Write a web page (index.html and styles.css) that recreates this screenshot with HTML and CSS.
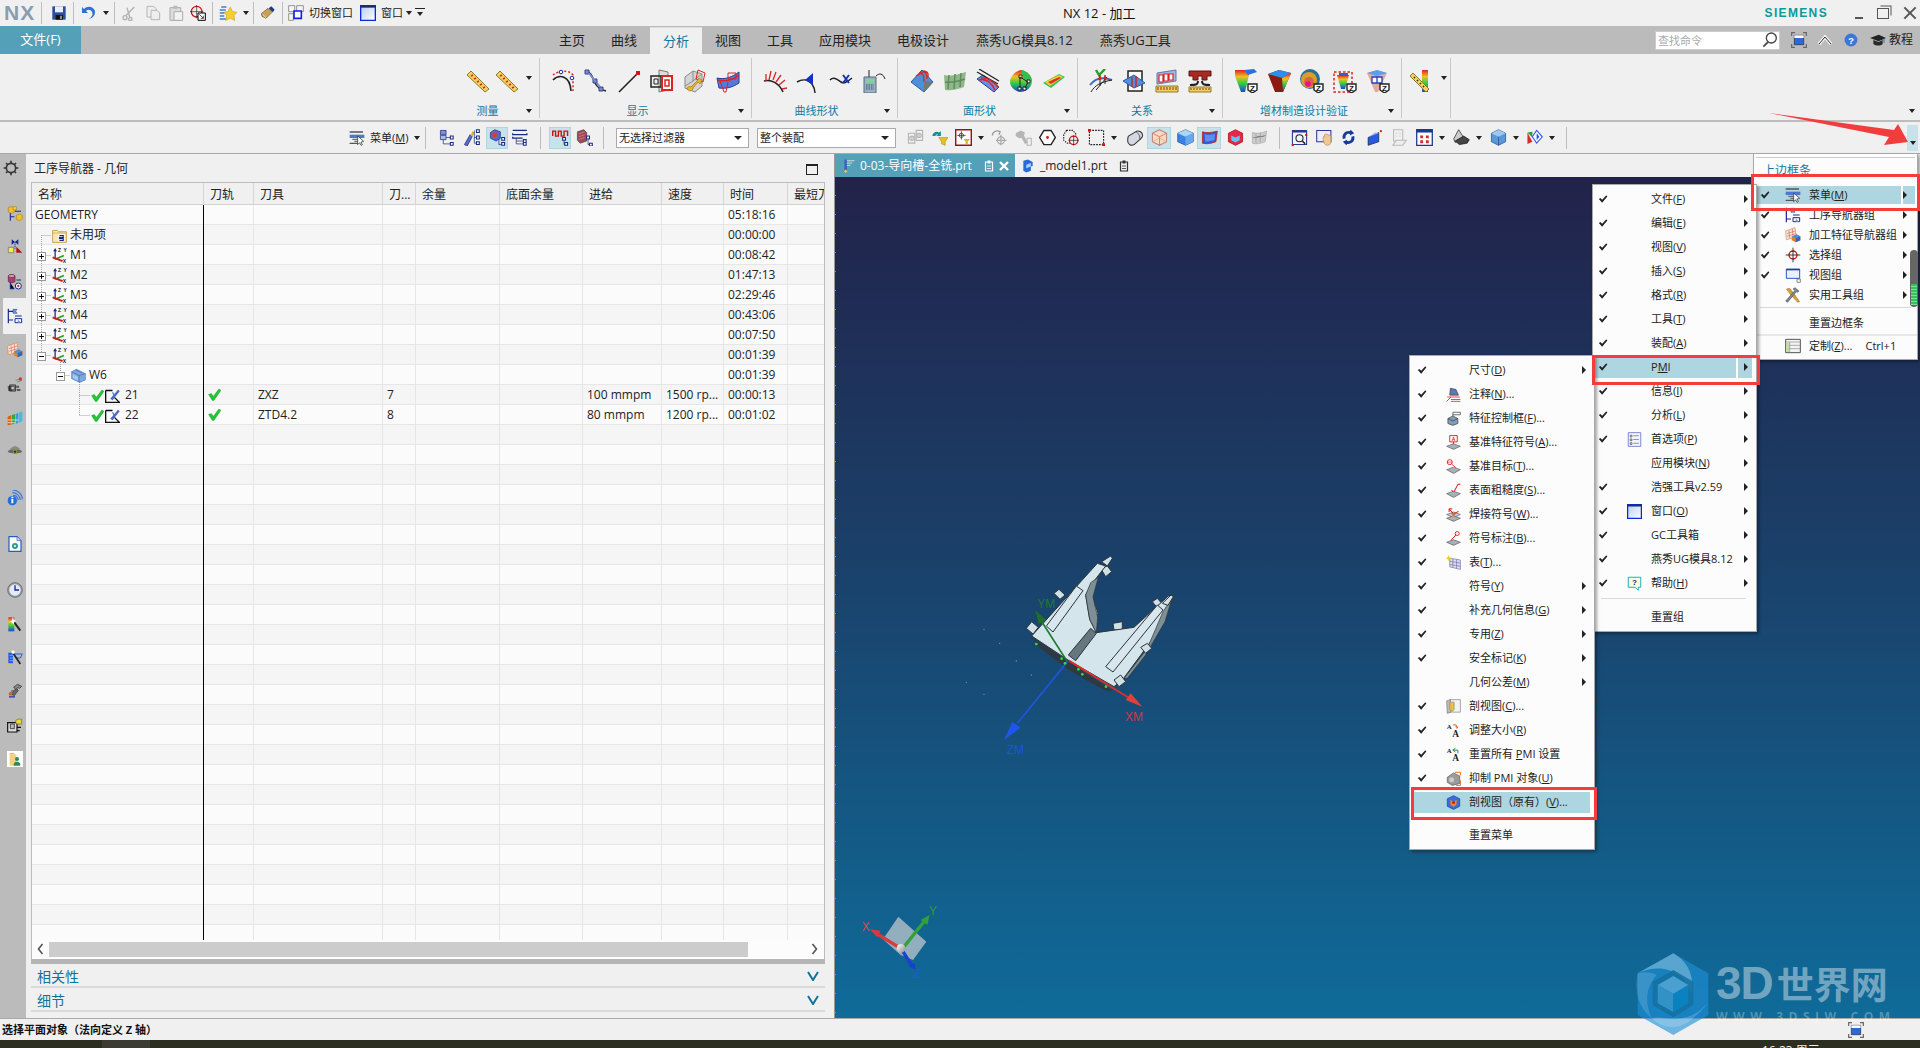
FILE: index.html
```html
<!DOCTYPE html>
<html lang="zh-CN">
<head>
<meta charset="utf-8">
<title>NX 12 - 加工</title>
<link rel="stylesheet" href="styles.css">
</head>
<body>
<svg class="defs" aria-hidden="true">
<defs>
<linearGradient id="gWin" x1="0" y1="0" x2="1" y2="1"><stop offset="0" stop-color="#b8cdf0"/><stop offset="1" stop-color="#fff"/></linearGradient>
<linearGradient id="gRain" x1="0" y1="0" x2="0" y2="1"><stop offset="0" stop-color="#e02020"/><stop offset=".3" stop-color="#f0c020"/><stop offset=".6" stop-color="#30d040"/><stop offset="1" stop-color="#2040e0"/></linearGradient>
<linearGradient id="gBall" x1="0" y1="0" x2="1" y2="1"><stop offset="0" stop-color="#fff"/><stop offset="1" stop-color="#8a8a8a"/></linearGradient>
<symbol id="save" viewBox="0 0 24 24"><path d="M2 2h20v20H2z" fill="#2a4f94"/><path d="M6 2h12v9H6z" fill="#e8eefc"/><path d="M7 15h11v7H7z" fill="#111"/><path d="M14 16h2v5h-2z" fill="#ccc"/></symbol>
<symbol id="undo" viewBox="0 0 24 24"><path d="M3 3v9h9L9 9c3-3 7-2 9 1 2 4 0 8-5 11 7-1 11-7 9-13-2-5-10-8-16-2z" fill="#2f72cc"/></symbol>
<symbol id="cut" viewBox="0 0 24 24"><g fill="none" stroke="#b0b0b0" stroke-width="2"><circle cx="6" cy="19" r="3"/><circle cx="14" cy="21" r="2.5"/><path d="M7 16 20 3M13 18 9 4"/></g></symbol>
<symbol id="copy" viewBox="0 0 24 24"><path d="M3 2h10l4 4v12H3z" fill="#eee" stroke="#b5b5b5" stroke-width="1.5"/><path d="M9 8h9l4 4v10H9z" fill="#eee" stroke="#b5b5b5" stroke-width="1.5"/></symbol>
<symbol id="paste" viewBox="0 0 24 24"><path d="M3 4h16v19H3z" fill="#ddd" stroke="#aaa" stroke-width="1.5"/><path d="M8 1h6v5H8z" fill="#bbb"/><path d="M9 10h13v13H9z" fill="#f2f2f2" stroke="#aaa" stroke-width="1.5"/></symbol>
<symbol id="target" viewBox="0 0 24 24"><circle cx="10" cy="10" r="8" fill="none" stroke="#c11" stroke-width="2"/><path d="M10 0v20M0 10h20" stroke="#222"/><path d="M12 12h11v11H12z" fill="#fff" stroke="#000" stroke-width="1.5"/><path d="M14 14l6 6M20 16v4h-4" stroke="#000" fill="none"/></symbol>
<symbol id="star" viewBox="0 0 24 24"><path d="M15 4l3 6 6 1-4 4 1 7-6-3-6 3 1-7-4-4 6-1z" fill="#f5cf30" stroke="#c09a10" stroke-width=".7"/><path d="M1 8h8M1 12h6M1 16h6M1 20h8M3 4h7" stroke="#3f7fd0" stroke-width="2"/></symbol>
<symbol id="brush" viewBox="0 0 24 24"><path d="M2 13 12 5l6 6-9 9-6-3z" fill="#c7a15a" stroke="#6a4f25"/><path d="M13 5l4-3 5 5-3 4z" fill="#1c3e78"/><path d="M4 14l5 5" stroke="#fff"/></symbol>
<symbol id="swin" viewBox="0 0 24 24"><path d="M1 1h9v9H1zM13 1h10v9H13zM1 13h7v10H1z" fill="#f5f5f5" stroke="#666"/><path d="M9 9h11v11H9z" fill="#fff" stroke="#1020e0" stroke-width="2.4"/></symbol>
<symbol id="win" viewBox="0 0 24 24"><path d="M1 1h22v22H1z" fill="url(#gWin)" stroke="#0a28e0" stroke-width="2"/><path d="M1 1h22v3H1z" fill="#14306e"/></symbol>
<symbol id="cust" viewBox="0 0 24 24"><path d="M1 2h22v20H1z" fill="#f4f4f4" stroke="#555" stroke-width="1.5"/><path d="M1 6h22M1 11h22M1 16h22M7 6v16" stroke="#8a8a8a"/><path d="M2 7h4v14H2z" fill="#bde0a8"/></symbol>

<symbol id="ruler" viewBox="0 0 24 24"><path d="M1 6 5 2 23 20 19 23z" fill="#f2d25a" stroke="#8b7a2c"/><path d="M5 7l2-1M8 10l2-1M11 13l2-1M14 16l2-1M17 19l2-1" stroke="#d22" stroke-width="1.6"/></symbol>
<symbol id="arc" viewBox="0 0 24 24"><path d="M2 11c6-6 17-5 18 11" fill="none" stroke="#222" stroke-width="1.6"/><path d="M2 6c5-4 15-6 20 0v16" fill="none" stroke="#d22" stroke-width="1.5" stroke-dasharray="2 2"/><circle cx="10" cy="3" r="1.8" fill="#fff" stroke="#22a"/><circle cx="21" cy="9" r="1.8" fill="#fff" stroke="#22a"/></symbol>
<symbol id="spline" viewBox="0 0 24 24"><path d="M3 2c6 3 6 9 8 12 2 4 6 7 11 8" fill="none" stroke="#222" stroke-width="1.5"/><path d="M1 1h4v4H1zM9 10h4v4H9zM15 18h4v4h-4z" fill="#7c88cc" stroke="#33478c"/><path d="M5 4l5 7M13 14l3 4" stroke="#7c88cc" stroke-width="2"/></symbol>
<symbol id="line" viewBox="0 0 24 24"><path d="M2 23 21 4" stroke="#222" stroke-width="1.6"/><path d="M19 2h4v4h-4z" fill="#d11"/></symbol>
<symbol id="rcube" viewBox="0 0 24 24"><path d="M9 1 18 3v18l-9 2z" fill="#ddd" stroke="#777"/><path d="M1 7h10v11H1z" fill="none" stroke="#222" stroke-width="1.5"/><path d="M4 10h4v5H4z" fill="none" stroke="#222"/><path d="M12 7h10v14H12z" fill="#fff" stroke="#d22" stroke-width="2"/><path d="M15 11h4v6h-4z" fill="none" stroke="#d22" stroke-width="1.5"/></symbol>
<symbol id="wrench" viewBox="0 0 24 24"><path d="M2 8l8-6 9 3v12l-7 6-10-4z" fill="#d4d4d4" stroke="#8a8a8a"/><path d="M10 2v10l-8 5M10 12l9-7" stroke="#8a8a8a" fill="none"/><path d="M15 1l7 3-2 9-7-3z" fill="none" stroke="#d22"/><path d="M4 20c2 3 6 2 6-1l5-6 2 2 2-4-3-2-2 3-6 6c-2-1-4 0-4 2z" fill="#e5b52a" stroke="#a07a10" stroke-width=".7"/></symbol>
<symbol id="bsurf" viewBox="0 0 24 24"><path d="M1 9c8 2 15-1 22-6v11c-6 4-12 6-20 5z" fill="#5a78d8" stroke="#223a9c"/><path d="M2 11c8 2 15 0 21-5" stroke="#d22" fill="none" stroke-width="1.5"/><path d="M12 4h8v6h-8z" fill="none" stroke="#d22"/><path d="M4 12l4 11h2l2-10" fill="none" stroke="#d22"/></symbol>
<symbol id="comb" viewBox="0 0 24 24"><path d="M1 12c7-2 15 2 19 11" fill="none" stroke="#222" stroke-width="1.6"/><path d="M3 12 3 5M6 11 8 2M10 11 13 3M13 13 18 6M16 16 22 11M19 20 24 19" stroke="#d22" stroke-width="1.3"/></symbol>
<symbol id="cone" viewBox="0 0 24 24"><path d="M1 13c5-3 11-3 15 2 2 3 3 6 3 9" fill="none" stroke="#222" stroke-width="1.5"/><path d="M17 4v12L9 11z" fill="#1830c0"/></symbol>
<symbol id="wave" viewBox="0 0 24 24"><path d="M1 11c4-4 8 0 11 2s6 0 11-4" fill="none" stroke="#222" stroke-width="1.6"/><path d="M14 6l6 8M20 6l-6 8" stroke="#1830c0" stroke-width="2"/></symbol>
<symbol id="calc" viewBox="0 0 24 24"><path d="M2 8h12v16H2z" fill="#9ab0c4" stroke="#5a6a7a"/><path d="M4 10h8v4H4z" fill="#7fd39a"/><path d="M4 16h8M4 18h8M4 20h8" stroke="#33556a" stroke-dasharray="1.5 1"/><path d="M7 1v7M14 7c3-3 7-3 9 3" fill="none" stroke="#222"/></symbol>
<symbol id="s1" viewBox="0 0 24 24"><path d="M1 13 12 1l11 12-9 10z" fill="#4d8fd8" stroke="#2d5aa0"/><path d="M6 7c6-4 8-4 8 6M9 4c6-2 8-2 8 6M13 2c4 0 6 2 5 6" fill="none" stroke="#d22" stroke-width="1.3"/><path d="M14 23 23 13 14 12z" fill="#777"/></symbol>
<symbol id="s2" viewBox="0 0 24 24"><path d="M1 6c7 2 14-1 22-3l-2 15c-6 2-12 4-19 3z" fill="#8fb78a"/><path d="M6 6l-1 14M12 5l-1 15M18 4l-1 14M2 13c7 1 14-1 20-3" stroke="#5f8c5c" stroke-width="1.5" fill="none"/></symbol>
<symbol id="s3" viewBox="0 0 24 24"><path d="M1 10 7 6 23 18l-5 5z" fill="#6a8ee0" stroke="#223a9c"/><path d="M1 3l21 12M3 0l20 12" stroke="#222" stroke-width="1.3"/><path d="M3 11c7-2 12 2 16 10M5 9c7-1 12 3 17 9" fill="none" stroke="#d22" stroke-width="1.4"/></symbol>
<symbol id="s4" viewBox="0 0 24 24"><path d="M12 1c6 1 11 6 11 11 0 8-8 11-12 11C5 22 1 17 1 13 1 7 7 2 12 1z" fill="url(#gRain)"/><path d="M12 1c6 1 11 6 11 11l-8-1z" fill="#30c050"/><path d="M10 6h3v3h-3zM18 11h3v3h-3zM9 18h3v3H9zM14 18h3v3h-3z" fill="#fff" stroke="#222"/><path d="M11 8v11M11 8l8 5M16 19l3-6" stroke="#222" fill="none"/></symbol>
<symbol id="s5" viewBox="0 0 24 24"><path d="M1 14 17 5l6 3-14 11z" fill="#38c060"/><path d="M3 13 17 6l4 2L8 17z" fill="#f0d030"/><path d="M6 13 17 8l2 1L9 15z" fill="#e03030"/></symbol>
<symbol id="r1" viewBox="0 0 24 24"><path d="M1 16c6-8 14-8 22-5" fill="none" stroke="#3a6ad0" stroke-width="2"/><path d="M2 23C6 16 12 13 23 11" fill="none" stroke="#222"/><path d="M7 1l3 5 6-6" fill="none" stroke="#2aa02a" stroke-width="2.4"/><path d="M7 21 18 8M11 6v11M16 6v9" stroke="#222"/><path d="M9 10l2-4 2 4M14 10l2-4 2 4" fill="#d22"/></symbol>
<symbol id="r2" viewBox="0 0 24 24"><path d="M6 2h14v20H6z" fill="#fff" stroke="#222" stroke-width="1.5"/><path d="M1 12 12 6l11 8-11 5z" fill="#4d8fe0" stroke="#2d5aa0"/><path d="M10 8v10M14 7v11" stroke="#d22" stroke-width="1.5"/></symbol>
<symbol id="r3" viewBox="0 0 24 24"><path d="M2 4l19-3v11L2 15z" fill="#9cb8de" stroke="#6078a8"/><path d="M4 6h4v7H4zM9 5h4v7H9zM14 5h4v6h-4z" fill="#fff" stroke="#d22" stroke-width="1.2"/><path d="M1 17h22v6H1z" fill="#f2d25a" stroke="#8b7a2c"/><path d="M3 18v3M6 18v3M9 18v3M12 18v3M15 18v3M18 18v3M21 18v3" stroke="#8b2a2a"/></symbol>
<symbol id="r4" viewBox="0 0 24 24"><path d="M1 2h22v5h-4v4h-5V7h-4v4H5V7H1z" fill="#a82a20" stroke="#611"/><path d="M10 12c0 4-3 4-8 4M14 12c0 4 3 4 8 4" fill="none" stroke="#222" stroke-width="2"/><path d="M1 18h22v5H1z" fill="#f2d25a" stroke="#8b7a2c"/><path d="M3 19v2M6 19v2M9 19v2M12 19v2M15 19v2M18 19v2M21 19v2" stroke="#8b2a2a"/></symbol>
<symbol id="f1" viewBox="0 0 24 24"><path d="M1 1h14v5l-4 17H7L1 7z" fill="url(#gRain)"/><path d="M10 1l10-1 3 3-9 3z" fill="#2e6fe0"/><path d="M14 15h9v6l-4.500 3-4.500-3z" fill="#fff" stroke="#222" stroke-width="1.400"/><text x="18.500" y="22" class="z">Z</text></symbol>
<symbol id="f2" viewBox="0 0 24 24"><path d="M12 1 24 4l-8 19H8L1 5z" fill="#8b1a10"/><path d="M12 1 24 4 15 9 1 5z" fill="#2e8fe8"/><path d="M15 9 24 4l-8 19z" fill="url(#gRain)"/></symbol>
<symbol id="f3" viewBox="0 0 24 24"><circle cx="10" cy="10" r="10" fill="#2a6f9a"/><circle cx="9" cy="11" r="8" fill="#d6a02a"/><circle cx="9" cy="13" r="5" fill="#e06040"/><circle cx="8" cy="15" r="2.800" fill="#e81090"/><path d="M14 15h9v6l-4.500 3-4.500-3z" fill="#fff" stroke="#222" stroke-width="1.400"/><text x="18.500" y="22" class="z">Z</text></symbol>
<symbol id="f4" viewBox="0 0 24 24"><path d="M1 3h18v20H1z" fill="none" stroke="#d22" stroke-width="1.500" stroke-dasharray="2.500 2"/><path d="M4 6h12l-4 14H8z" fill="url(#gRain)"/><path d="M6 4h9v3H6z" fill="#2e5fd0"/><path d="M14 15h9v6l-4.500 3-4.500-3z" fill="#fff" stroke="#222" stroke-width="1.400"/><text x="18.500" y="22" class="z">Z</text></symbol>
<symbol id="f5" viewBox="0 0 24 24"><path d="M1 4 11 1l10 3-9 19h-3z" fill="#e8a8a0"/><path d="M1 4 11 1l10 3-10 3z" fill="#5aa0e8"/><path d="M6 8h5v6H6zM11 8h5v6h-5z" fill="#fff" stroke="#2040c0" stroke-width="1.300"/><path d="M14 15h9v6l-4.500 3-4.500-3z" fill="#fff" stroke="#222" stroke-width="1.400"/><text x="18.500" y="22" class="z">Z</text></symbol>
<symbol id="hruler" viewBox="0 0 24 24"><path d="M13 1h6v22h-6z" fill="url(#gRain)"/><path d="M1 7 4 4 20 20l-3 3z" fill="#f2d25a" stroke="#8b7a2c"/><path d="M5 9l1-1M8 12l1-1M11 15l1-1M14 18l1-1" stroke="#222" stroke-width="1.500"/></symbol>

<symbol id="menuic" viewBox="0 0 24 24"><path d="M1 3h20M1 20h14" stroke="#555" stroke-width="2"/><path d="M1 7h22v5H1z" fill="#4a7ad0"/><path d="M5 14h9M8 17h7" stroke="#555" stroke-width="1.500"/><path d="M13 9l9 8-4 1 2 4-2 1-2-4-3 3z" fill="#fff" stroke="#222"/></symbol>
<symbol id="n1" viewBox="0 0 24 24"><path d="M2 2h8v6H2z" fill="#7a90d8" stroke="#1a2a80"/><path d="M2 9h8v6H2z" fill="#aab8e8" stroke="#1a2a80"/><path d="M6 15v6h10M10 12h6" stroke="#1a2a80" fill="none"/><path d="M16 10h4v4h-4zM16 19h4v4h-4z" fill="#fff" stroke="#1a2a80" stroke-width="1.500"/></symbol>
<symbol id="n2" viewBox="0 0 24 24"><path d="M2 22 10 8l3 3-7 13z" fill="#5a6ac0" stroke="#1a2a80"/><path d="M13 3l3 2-2 5-3-1z" fill="#d8b030"/><path d="M16 2v18M16 12h4M16 20h4" stroke="#1a2a80" fill="none"/><path d="M19 1h4v4h-4zM19 10h4v4h-4zM19 18h4v4h-4z" fill="#fff" stroke="#1a2a80" stroke-width="1.500"/></symbol>
<symbol id="n3" viewBox="0 0 24 24"><path d="M2 5 8 1l8 3v9l-6 4-8-4z" fill="#5a6ac8" stroke="#1a2a80"/><circle cx="8" cy="8" r="3.500" fill="#e23a2a"/><path d="M14 14v8h5" stroke="#1a2a80" fill="none"/><path d="M18 12h4v4h-4zM18 19h4v4h-4z" fill="#fff" stroke="#1a2a80" stroke-width="1.500"/></symbol>
<symbol id="n4" viewBox="0 0 24 24"><path d="M1 2h20M1 6v2h20V6M1 11v2h14" stroke="#1a2a80" stroke-width="1.800" fill="none"/><path d="M6 13v8h10M6 17h10" stroke="#1a2a80" fill="none"/><path d="M16 15h4v4h-4zM16 19h4v4h-4z" fill="#fff" stroke="#1a2a80" stroke-width="1.500"/></symbol>
<symbol id="n5" viewBox="0 0 24 24"><path d="M1 10V3h4v7h4V3h4v7h4V3h5v7" fill="none" stroke="#c11" stroke-width="2"/><path d="M17 13v9h4" stroke="#1a2a80" fill="none"/><path d="M15 12h4v4h-4zM18 19h4v4h-4z" fill="#fff" stroke="#1a2a80" stroke-width="1.500"/></symbol>
<symbol id="n6" viewBox="0 0 24 24"><path d="M2 4l9-3 4 4v12l-9 3-4-4z" fill="#a04a58" stroke="#444"/><path d="M4 7l8-3M4 11l8-3M4 15l8-3" stroke="#d88" /><path d="M17 12v10h4" stroke="#1a2a80" fill="none"/><path d="M15 10h4v4h-4zM19 20h4v4h-4z" fill="#fff" stroke="#1a2a80" stroke-width="1.500"/></symbol>
<symbol id="chain" viewBox="0 0 24 24"><g fill="none" stroke="#b5b5b5" stroke-width="1.600"><path d="M2 6h9v14H2zM13 2h9v14h-9z"/><path d="M7 10v5M17 7v5"/><circle cx="7" cy="13" r="3"/><circle cx="17" cy="9" r="3"/></g></symbol>
<symbol id="filt1" viewBox="0 0 24 24"><path d="M2 10c0-5 6-8 9-5l3-2v7H7l3-2c-2-1-3 0-4 2z" fill="#1a8f9a"/><path d="M11 12h13l-4 6v5l-5-2v-3z" fill="#e8c020" stroke="#a08010" stroke-width=".7"/></symbol>
<symbol id="filt2" viewBox="0 0 24 24"><path d="M1 1h22v22H1z" fill="#fff" stroke="#a01010" stroke-width="2"/><path d="M9 3v12M3 9h12" stroke="#222"/><circle cx="9" cy="9" r="3" fill="none" stroke="#222"/><path d="M12 14h9l-3 4v4l-3-1v-3z" fill="#e8b020"/></symbol>
<symbol id="rot" viewBox="0 0 24 24"><g fill="none" stroke="#aaa" stroke-width="1.800"><circle cx="14" cy="16" r="5"/><path d="M14 8v15M7 16h15"/><path d="M2 9c0-5 6-8 11-5l-2 4" stroke="#999"/></g></symbol>
<symbol id="gbolt" viewBox="0 0 24 24"><g fill="#b5b5b5"><path d="M1 6l7-4 6 3-2 7-6 1-5-3z"/><path d="M9 12l4-2 5 9-4 2z"/></g><path d="M17 13h6v10h-6z" fill="none" stroke="#b5b5b5" stroke-width="1.500"/></symbol>
<symbol id="hex" viewBox="0 0 24 24"><path d="M7 2h10l6 10-6 10H7L1 12z" fill="#fff" stroke="#222" stroke-width="2"/><circle cx="12" cy="12" r="2" fill="#d11"/></symbol>
<symbol id="lasso" viewBox="0 0 24 24"><path d="M5 2h9l4 5v5M5 2 1 8v8l5 4h4" fill="none" stroke="#222" stroke-width="1.600" stroke-dasharray="2 1.500"/><circle cx="15" cy="16" r="6" fill="none" stroke="#c11" stroke-width="1.800"/><path d="M15 9v14M8 16h14" stroke="#222"/></symbol>
<symbol id="rectsel" viewBox="0 0 24 24"><path d="M2 2h20v20H2z" fill="none" stroke="#222" stroke-width="1.600" stroke-dasharray="2.500 1.500"/><path d="M0 0h4v4H0zM20 20h4v4h-4z" fill="#d11"/></symbol>
<symbol id="cyl" viewBox="0 0 24 24"><path d="M2 10 12 4c4-3 10 0 10 5 0 3-2 4-4 6l-8 7c-4 2-9 0-9-5 0-3 0-5 1-7z" fill="#d4d8e0" stroke="#333" stroke-width="1.500"/><path d="M12 4c4 1 7 6 6 11" fill="none" stroke="#333"/></symbol>
<symbol id="cube1" viewBox="0 0 24 24"><path d="M12 1 22 6v12l-10 5L2 18V6z" fill="#f8d8c0" stroke="#b88" stroke-width="1.500"/><path d="M2 6l10 5 10-5M12 11v12" stroke="#d06050" fill="none"/><path d="M2 18l10-5 10 5" stroke="#e8a860" fill="none"/></symbol>
<symbol id="cube2" viewBox="0 0 24 24"><path d="M12 1 23 6v12l-11 5L1 18V6z" fill="#3c82e0" stroke="#1a4a9c"/><path d="M1 6l11 5 11-5-11-5z" fill="#a8d8f8"/><path d="M12 11v12l11-5V6z" fill="#6aa8ec"/></symbol>
<symbol id="surf" viewBox="0 0 24 24"><path d="M2 4c6 2 13 1 21-1l-2 15c-6 2-12 4-19 2z" fill="#2a5ae0" stroke="#c21" stroke-width="1.200"/><path d="M5 7c5 2 10 1 15 0l-1 9c-5 1-9 2-13 2z" fill="#5a90ec"/></symbol>
<symbol id="redcube" viewBox="0 0 24 24"><path d="M12 1 22 6v12l-10 5L2 18V6z" fill="#e8264a" stroke="#a00"/><path d="M6 9l6 3 6-3v7l-6 3-6-3z" fill="#6ac0f0"/></symbol>
<symbol id="gsurf" viewBox="0 0 24 24"><path d="M2 5c6 2 13 1 20-2l-2 15c-6 2-12 4-18 2z" fill="#ccc" stroke="#aaa"/><path d="M7 6v13M13 5v13M2 12c7 0 13-1 19-3" stroke="#999"/></symbol>
<symbol id="zfit" viewBox="0 0 24 24"><path d="M2 2h20v20H2z" fill="#f2f4ff" stroke="#2a3a90" stroke-width="1.500"/><path d="M2 2h20v3H2z" fill="#2a3a90"/><circle cx="12" cy="13" r="5" fill="none" stroke="#222" stroke-width="1.500"/><path d="M16 17l4 4" stroke="#222" stroke-width="2"/><path d="M1 21h3v3H1zM20 7h3v3h-3z" fill="#d11"/></symbol>
<symbol id="pan" viewBox="0 0 24 24"><path d="M1 2h20v16H1z" fill="#eef" stroke="#2a3a90" stroke-width="1.500"/><path d="M10 13c0-3 1-3 2-2V8c1-2 3-1 3 0 1-1 3 0 3 1 2-1 3 0 3 2v7c0 3-2 5-5 5-4 0-6-5-6-10z" fill="#f0c890" stroke="#a07040" stroke-width=".7"/></symbol>
<symbol id="refresh" viewBox="0 0 24 24"><path d="M4 14C2 7 8 2 14 3l1-2 5 5-6 3 0-2C10 6 7 9 8 13zM20 10c2 7-4 12-10 11l-1 2-5-5 6-3 0 2c4 1 7-2 6-6z" fill="#1a3a98"/></symbol>
<symbol id="bluei" viewBox="0 0 24 24"><path d="M3 12 18 5v13L3 23z" fill="#2a5ae0" stroke="#123"/><path d="M3 12l5-2 10-4-5-1z" fill="#80b0f0"/><circle cx="21" cy="3" r="1.500" fill="#d11"/></symbol>
<symbol id="gdoc" viewBox="0 0 24 24"><path d="M5 1h13v16H5z" fill="none" stroke="#bbb" stroke-width="1.500"/><path d="M8 6h2M13 6h2M8 10h2M13 10h2" stroke="#bbb"/><path d="M9 16h14l-5 7H4z" fill="#eee" stroke="#bbb" stroke-width="1.500"/></symbol>
<symbol id="grid" viewBox="0 0 24 24"><path d="M1 1h22v22H1z" fill="#fff" stroke="#1a3a90" stroke-width="1.800"/><path d="M1 1h22v4H1z" fill="#1a3a90"/><path d="M6 9h4v4H6zM14 9h4v4h-4zM6 16h4v4H6zM14 16h4v4h-4z" fill="#d82a2a"/></symbol>
<symbol id="printer" viewBox="0 0 24 24"><path d="M8 1 15 12 3 19 1 14z" fill="#ccc" stroke="#222"/><path d="M3 17 15 10l8 5-3 5-11 2z" fill="#444" stroke="#111"/></symbol>
<symbol id="bcube" viewBox="0 0 24 24"><path d="M12 1 22 6v12l-10 5L2 18V6z" fill="#5a98d8" stroke="#1a4a9c"/><path d="M2 6l10 5 10-5-10-5z" fill="#9cc8f0"/><path d="M12 11v12" stroke="#1a4a9c"/></symbol>
<symbol id="tri" viewBox="0 0 24 24"><path d="M2 5v16l7-3z" fill="#d82a2a"/><path d="M2 5l7 7V4z" fill="#2aa02a"/><path d="M15 2l8 9-8 9-6-9z" fill="#fff" stroke="#2a5ae0" stroke-width="1.500"/><path d="M15 6l4 5-4 5z" fill="#2a5ae0"/></symbol>

<symbol id="gear" viewBox="0 0 24 24"><circle cx="12" cy="12" r="7" fill="none" stroke="#333" stroke-width="2.400"/><path d="M12 1v4M12 19v4M1 12h4M19 12h4M4.500 4.500l3 3M16.500 16.500l3 3M19.500 4.500l-3 3M7.500 16.500l-3 3" stroke="#333" stroke-width="2.400"/></symbol>
<symbol id="a1" viewBox="0 0 24 24"><path d="M2 2l5-1 5 2v5l-5 3-5-2z" fill="#f0c030" stroke="#b08010"/><path d="M9 1h5v5H9z" fill="#f8d040" stroke="#b08010"/><path d="M5 11v11M5 16h6M12 8h9" stroke="#14288c" stroke-width="1.600"/><path d="M14 14l5-2 4 2v5l-4 3-5-2z" fill="#f0c030" stroke="#b08010"/></symbol>
<symbol id="a2" viewBox="0 0 24 24"><path d="M7 2l5 4 5-4v8l-5-4-5 4z" fill="#14288c"/><path d="M12 6v10" stroke="#14288c" stroke-width="1.500" stroke-dasharray="2 1"/><path d="M2 14h8v8H2z" fill="#f8e858" stroke="#666"/><path d="M14 22h9l-9-9z" fill="#b01010"/></symbol>
<symbol id="a3" viewBox="0 0 24 24"><path d="M2 3a5 2 0 0 1 10 0v8a5 2 0 0 1-10 0z" fill="#a8406a" stroke="#5a1a3a"/><ellipse cx="7" cy="3" rx="5" ry="2" fill="#e8b8c8" stroke="#5a1a3a"/><path d="M5 13v9h6M14 9h7" stroke="#14288c" stroke-width="1.600"/><circle cx="17" cy="18" r="4.500" fill="#fff" stroke="#14288c" stroke-width="1.500"/><circle cx="17" cy="18" r="1.800" fill="#c03070"/></symbol>
<symbol id="a4" viewBox="0 0 24 24"><path d="M2 1v22M2 5h7M2 18h7M12 12h10" stroke="#14288c" stroke-width="1.800" fill="none"/><path d="M9 2h6l-2 3 2 3H9z" fill="#6a9ae0" stroke="#14288c" stroke-width=".7"/><path d="M12 16h10v6H12z" fill="#fff" stroke="#14288c" stroke-width="1.500"/><path d="M16 22v-5l5 5z" fill="#6a9ae0"/></symbol>
<symbol id="a5" viewBox="0 0 24 24"><path d="M1 6l14-5 2 14-15 4z" fill="#f4e8d8" stroke="#d08a5a"/><path d="M3 10l12-4M3 14l13-4M6 5l1 12M11 3l1 13" stroke="#d66"/><path d="M10 15l7-4 6 3v6l-7 3-6-3z" fill="#e88020"/><path d="M10 15l7-4 6 3-7 3z" fill="#4a90e0"/><path d="M16 17l7-3v6l-7 3z" fill="#2a6ac0"/></symbol>
<symbol id="a6" viewBox="0 0 24 24"><path d="M1 14l6-1 1 8H2z" fill="#555"/><path d="M4 12h9v9H4z" fill="none" stroke="#222" stroke-width="1.400"/><path d="M6 14h5v5H6z" fill="#ccc" stroke="#222"/><path d="M13 5l7-2M15 8l7-3" stroke="#888" stroke-width="1.500"/><circle cx="20" cy="3" r="2.500" fill="#e03020"/><path d="M14 13h4v3h-4zM15 18h5v3h-5z" fill="#555"/></symbol>
<symbol id="a7" viewBox="0 0 24 24"><path d="M1 10l5-2v14l-5 1z" fill="#e06010"/><path d="M7 8l5-2v14l-5 2z" fill="#2eaa3a"/><path d="M13 6l4-2v15l-4 2z" fill="#30a0e0"/><path d="M18 4l5-2v15l-5 2z" fill="#40c0e0"/><path d="M1 15h16M1 19h12" stroke="#fff"/></symbol>
<symbol id="a8" viewBox="0 0 24 24"><path d="M1 13c3-6 18-6 22 0-4 3-18 3-22 0z" fill="#666"/><path d="M4 9l6-4h4l6 4-3 1H7z" fill="#8a8a8a"/><circle cx="12" cy="13" r="3.500" fill="#7a9a20"/><circle cx="12" cy="13" r="1.500" fill="#222"/></symbol>
<symbol id="a9" viewBox="0 0 24 24"><circle cx="8" cy="16" r="7" fill="#1f6fdc"/><path d="M6.500 10h3v2h-3zM6.500 13h3v7h-3z" fill="#fff"/><path d="M8 4c6 0 12 5 12 11M8 0c8 0 15 6 15 14M9 8c4 0 7 3 8 7" fill="none" stroke="#3a78d8" stroke-width="1.800"/></symbol>
<symbol id="a10" viewBox="0 0 24 24"><path d="M3 1h12l6 6v16H3z" fill="#fff" stroke="#2a5ac0" stroke-width="1.800"/><path d="M15 1v6h6" fill="#cde" stroke="#2a5ac0"/><circle cx="12" cy="15" r="4.500" fill="#2e9a8a"/><circle cx="12" cy="15" r="1.500" fill="#fff"/></symbol>
<symbol id="a11" viewBox="0 0 24 24"><circle cx="12" cy="12" r="11" fill="#9aa0a8" stroke="#555"/><circle cx="12" cy="12" r="8.500" fill="#e4ecf8"/><path d="M12 5v7h6" stroke="#14288c" stroke-width="2" fill="none"/></symbol>
<symbol id="a12" viewBox="0 0 24 24"><path d="M2 2h9v21H2z" fill="url(#gRain)"/><path d="M9 7l11 15" stroke="#222" stroke-width="3"/><path d="M9 1l1 5 4 1-3 2-1 4-2-3-4-1 3-2z" fill="#fff"/></symbol>
<symbol id="a13" viewBox="0 0 24 24"><path d="M2 4h7v16H2z" fill="#2a5ae0"/><path d="M4 8h5M4 12h5M4 16h5" stroke="#9cf"/><path d="M9 6h14l-3 6h-6z" fill="none" stroke="#2a5ae0" stroke-width="1.500"/><path d="M10 6l10 15" stroke="#222" stroke-width="2.500"/><path d="M1 22l2-2 2 2 2-2" stroke="#e8c020" fill="none" stroke-width="1.500"/><circle cx="9" cy="3" r="2.500" fill="#fff"/></symbol>
<symbol id="a14" viewBox="0 0 24 24"><path d="M6 16l8-8 3 3-6 8z" fill="#666" stroke="#333"/><path d="M10 6l6-4 6 3-3 3-3-1-3 3z" fill="#888" stroke="#222"/><path d="M3 19h9v3H3z" fill="#5050a8"/><circle cx="5" cy="16" r="2.500" fill="#d8601a"/><path d="M6 12h5" stroke="#555" stroke-width="1.600"/></symbol>
<symbol id="a15" viewBox="0 0 24 24"><path d="M1 7h14v14H1z" fill="#ddd" stroke="#111" stroke-width="1.800"/><path d="M5 9h6v7H5z" fill="#bbb" stroke="#111"/><path d="M13 5c0-3 5-4 9-3v7h-8z" fill="#e8d838" stroke="#6a6a10"/><path d="M15 13h6v2h-6zM15 18h4v2h-4z" fill="#111"/></symbol>
<symbol id="a16" viewBox="0 0 24 24"><path d="M0 0h24v24H0z" fill="#fff"/><path d="M4 5h10v17H4z" fill="#f4d27a"/><path d="M4 3h6l2 2H4z" fill="#e8b850"/><circle cx="15" cy="12" r="3" fill="#2f8a5a"/><path d="M10 22c0-5 2-6 5-6s5 1 5 6z" fill="#2f8a5a"/></symbol>

<symbol id="mcs" viewBox="0 0 24 24"><path d="M5 18V3" stroke="#14288c" stroke-width="2"/><path d="M5 0l3 5H2z" fill="#14288c"/><path d="M5 18 19 12" stroke="#2aa02a" stroke-width="2.800"/><path d="M1 15l16 6" stroke="#c82020" stroke-width="3.200"/><text x="12" y="7" class="axis">Z</text><text x="21" y="7" class="axis">Y</text><text x="20" y="24" class="axis">X</text></symbol>
<symbol id="folder" viewBox="0 0 24 24"><path d="M1 4h8l2 2h12v17H1z" fill="#f8e8b0" stroke="#c09a40" stroke-width="1.400"/><path d="M1 8h22" stroke="#c09a40"/><path d="M10 10h10v11H10z" fill="#fffbe8"/><path d="M12 12h6v3h-6v2h6v3h-6" fill="none" stroke="#14288c" stroke-width="1.800"/></symbol>
<symbol id="wp" viewBox="0 0 24 24"><path d="M1 6l8-4 6 3 8 4v10l-9 4-13-6z" fill="#7fa8e0" stroke="#4a74b8"/><path d="M1 6l12 6 10-3M13 12v11M7 3l11 5" stroke="#3a64a8" fill="none"/><path d="M3 10l8 4v6l-8-4z" fill="#a8c8f0"/></symbol>
<symbol id="ok" viewBox="0 0 24 24"><path d="M1 12l5-2 4 5L20 2l4 2-13 19h-3z" fill="#1ec832" stroke="#108a20" stroke-width=".6"/></symbol>
<symbol id="op" viewBox="0 0 24 24"><path d="M1 4h11M1 4v19h22l-8-8" fill="none" stroke="#111" stroke-width="2.200"/><path d="M9 17 21 3l2 2-11 14z" fill="#4a6ac8" stroke="#2a3a90" stroke-width=".6"/><path d="M12 7c2 2 3 5 3 8" stroke="#4a6ac8" stroke-width="2" fill="none"/></symbol>
<symbol id="ck" viewBox="0 0 12 12"><path d="M1 6l1.800-1.200L5 7 10 1.500 11.200 3 5 10.500z" fill="#222"/></symbol>

<symbol id="mnote" viewBox="0 0 24 24"><path d="M7 2l9 2 4 9H6z" fill="#5a7ab8" stroke="#333"/><path d="M1 23l7-7M2 16h20M8 20h15M8 23h15" stroke="#d11" stroke-width="1.200"/></symbol>
<symbol id="mfcf" viewBox="0 0 24 24"><path d="M3 12 11 8l8 4v8l-8 3-8-3z" fill="#7f9fb8" stroke="#333"/><path d="M3 12l8 4 8-4" fill="none" stroke="#333"/><path d="M11 8V2h12v4H11" fill="#fff" stroke="#222"/></symbol>
<symbol id="mdat" viewBox="0 0 24 24"><path d="M6 1h12v10H6z" fill="#fff" stroke="#d11" stroke-width="1.400"/><text x="12" y="9.500" class="axisr">A</text><path d="M12 11v5" stroke="#d11" stroke-width="1.400"/><path d="M1 18l11-4 11 4-11 5z" fill="#aab0b8" stroke="#555"/></symbol>
<symbol id="mtgt" viewBox="0 0 24 24"><circle cx="6" cy="5" r="4" fill="#fff" stroke="#d11" stroke-width="1.400"/><path d="M2 5h8M9 8l7 6" stroke="#d11"/><path d="M1 17l11-4 11 4-11 6z" fill="#aab0b8" stroke="#555"/></symbol>
<symbol id="mrgh" viewBox="0 0 24 24"><path d="M9 11l3 5 7-14h4" fill="none" stroke="#d11" stroke-width="1.600"/><path d="M1 17l11-4 11 4-11 6z" fill="#aab0b8" stroke="#555"/></symbol>
<symbol id="mwld" viewBox="0 0 24 24"><path d="M1 12l11-4 11 4-11 5z" fill="#c9ccd0" stroke="#555"/><path d="M1 18l11-4 11 4-11 5z" fill="#aab0b8" stroke="#555"/><path d="M5 3l7 8 8-4M5 3h5M5 3v5" fill="none" stroke="#d11" stroke-width="1.600"/><path d="M7 10l6 4 4-5z" fill="#e86020"/></symbol>
<symbol id="msym" viewBox="0 0 24 24"><path d="M1 18l11-4 11 4-11 5z" fill="#aab0b8" stroke="#555"/><path d="M8 15 16 6" stroke="#d11" stroke-width="1.600"/><circle cx="18" cy="4" r="3.200" fill="#fff" stroke="#d11" stroke-width="1.400"/></symbol>
<symbol id="mtbl" viewBox="0 0 24 24"><path d="M6 5l17 3v15L6 19z" fill="#dde" stroke="#6a6aa0"/><path d="M6 10l17 3M6 15l17 3M11 6v14M17 7v14" stroke="#6a6aa0"/><path d="M4 0l1.500 3.500L9 5 5.500 6.500 4 10 2.500 6.500 0 5l2.500-1.500z" fill="#f0d020"/></symbol>
<symbol id="msec" viewBox="0 0 24 24"><path d="M6 1h17v20H6z" fill="#f2f2f2" stroke="#777"/><path d="M1 3l6-2 1 20-6 2z" fill="#bbb" stroke="#777"/><path d="M6 5h7v12l-3 3-4-3z" fill="#e8c040" stroke="#886"/></symbol>
<symbol id="mres" viewBox="0 0 24 24"><text x="1" y="10" class="axisb">A</text><text x="10" y="23" class="axisbb">A</text><path d="M11 3h5l2 4-3-1M19 6l-2 3" fill="none" stroke="#e06020" stroke-width="1.600"/></symbol>
<symbol id="mreset" viewBox="0 0 24 24"><text x="1" y="10" class="axisb">A</text><text x="10" y="23" class="axisbb">A</text><path d="M15 2l-4 3 4 3M11 5h8v5" fill="none" stroke="#2a8a6a" stroke-width="1.600"/></symbol>
<symbol id="msup" viewBox="0 0 24 24"><path d="M2 10l10-7 10 5v12l-12 3-8-5z" fill="#9a9a9a" stroke="#555"/><path d="M14 2h9v5M23 15v8h-7" stroke="#e07020" stroke-width="1.600" fill="none"/><circle cx="9" cy="14" r="4" fill="#ccc"/></symbol>
<symbol id="msec2" viewBox="0 0 24 24"><path d="M12 1 22 6v12l-10 5L2 18V6z" fill="#3c6ae0" stroke="#1a3aa0"/><path d="M7 8l5 2 5-2v7l-5 4-5-4z" fill="#e88a20"/><path d="M10 10h4v4h-4z" fill="#c11"/></symbol>
<symbol id="mpref" viewBox="0 0 24 24"><path d="M2 1h20v22H2z" fill="#f2f4ff" stroke="#7a84d0" stroke-width="1.500"/><path d="M5 5h3v3H5zM5 11h3v3H5zM5 17h3v3H5z" fill="#c0c8e8" stroke="#555"/><path d="M10 6h9M10 12h9M10 18h9" stroke="#888" stroke-width="1.400"/></symbol>
<symbol id="mhelp" viewBox="0 0 24 24"><path d="M2 2h20v16h-4v5l-5-5H2z" fill="#ffffd8" stroke="#1ab" stroke-width="1.500"/><text x="12" y="15" class="qm">?</text></symbol>
<symbol id="msel" viewBox="0 0 24 24"><circle cx="12" cy="12" r="6" fill="none" stroke="#c11" stroke-width="2"/><path d="M12 1v22M1 12h22" stroke="#222" stroke-width="1.300"/></symbol>
<symbol id="mview" viewBox="0 0 24 24"><path d="M2 3h20v14H2z" fill="#e8f0ff" stroke="#2a5ac0" stroke-width="1.500"/><path d="M2 3h20v2H2z" fill="#2a3a90"/><path d="M18 18h5v5h-5z" fill="#fff" stroke="#555"/></symbol>
<symbol id="mtool" viewBox="0 0 24 24"><path d="M2 3l5-1 5 6 10 14-3 1L8 11z" fill="#d8a030" stroke="#806010" stroke-width=".6"/><path d="M1 21 15 5l-3-2 3-2 6 5-2 2-2-1-13 16z" fill="#7a8a98" stroke="#333" stroke-width=".7"/></symbol>
<symbol id="tabtool" viewBox="0 0 24 24"><path d="M6 1h4v20H6z" fill="#3a5ac8"/><path d="M10 3h13M10 7h9M10 11h6" stroke="#ddd" stroke-width="1.600"/><path d="M8 18l3 3-3 3-3-3z" fill="#f0d020"/></symbol>
<symbol id="tabcube" viewBox="0 0 24 24"><path d="M4 3l8-2 8 4v7l-3 1v7l-8 3-5-3z" fill="#2a6ad8"/><path d="M9 10l8-3v6l-8 3z" fill="#a8d0f8"/></symbol>
<symbol id="docw" viewBox="0 0 24 24"><path d="M5 4h14v18H5z" fill="none" stroke="currentColor" stroke-width="2.400"/><path d="M9 1h6v6H9z" fill="currentColor"/><path d="M8 12h8M8 17h8" stroke="currentColor" stroke-width="1.600"/></symbol>
<symbol id="magn" viewBox="0 0 24 24"><circle cx="14" cy="9" r="7.500" fill="#fff" stroke="#444" stroke-width="2"/><path d="M9 15 2 22" stroke="#555" stroke-width="3"/></symbol>
<symbol id="fit" viewBox="0 0 24 24"><path d="M1 6V1h5M18 1h5v5M23 18v5h-5M6 23H1v-5" fill="none" stroke="#666" stroke-width="1.800"/><path d="M5 5h14v14H5z" fill="#2a6ad8" stroke="#334" stroke-width="1.200"/><path d="M5 5h14v4H5z" fill="#fff"/></symbol>
<symbol id="help" viewBox="0 0 24 24"><circle cx="12" cy="12" r="11" fill="#3a78d8"/><text x="12" y="18" class="qw">?</text></symbol>
<symbol id="cap" viewBox="0 0 24 24"><path d="M0 9l13-5 11 5-11 5z" fill="#222"/><path d="M5 12v6c4 3 11 3 14 0v-6l-6 3z" fill="#2a2a2a"/><path d="M21 10v6" stroke="#3a8ad8" stroke-width="2"/></symbol>
</defs>
</svg>

<div class="titlebar">
  <span class="nx">NX</span><i class="sep"></i>
  <span class="b m5"><svg class="i16"><use href="#save"/></svg></span><i class="sep m2"></i>
  <span class="b m2"><svg class="i16"><use href="#undo"/></svg></span><span class="ar"></span><i class="sep m2"></i>
  <span class="b m2"><svg class="i16"><use href="#cut"/></svg></span><span class="b"><svg class="i16"><use href="#copy"/></svg></span><span class="b n22"><svg class="i16"><use href="#paste"/></svg></span><span class="b n22"><svg class="i16"><use href="#target"/></svg></span><i class="sep m3"></i>
  <span class="b m3"><svg class="i18"><use href="#star"/></svg></span><span class="ar"></span><i class="sep m1"></i>
  <span class="b m2"><svg class="i16"><use href="#brush"/></svg></span><i class="sep m2"></i>
  <span class="b m1"><svg class="i16"><use href="#swin"/></svg></span><span class="tt m1">切换窗口</span>
  <span class="b m3"><svg class="i16"><use href="#win"/></svg></span><span class="tt m1">窗口</span><span class="ar"></span><span class="cust"></span>
  <span class="apptitle">NX 12 - 加工</span>
  <span class="siemens">SIEMENS</span>
  <span class="wbtns"><span class="wmin"></span><span class="wmax"></span><span class="wclose"></span></span>
</div>

<div class="tabbar">
  <div class="filetab">文件(F)</div>
  <nav class="tabs">
    <span class="tab">主页</span><span class="tab">曲线</span><span class="tab on">分析</span><span class="tab">视图</span><span class="tab">工具</span><span class="tab">应用模块</span><span class="tab">电极设计</span><span class="tab wx">燕秀UG模具8.12</span><span class="tab">燕秀UG工具</span>
  </nav>
  <div class="search"><span class="ph">查找命令</span><svg class="i16"><use href="#magn"/></svg></div>
  <span class="b b26 m6"><svg class="i16"><use href="#fit"/></svg></span>
  <span class="b b26"><svg class="chev" viewBox="0 0 14 10"><path d="M1 9l6-7 6 7" fill="none" stroke="#fff" stroke-width="3"/><path d="M1 9l6-7 6 7" fill="none" stroke="#222" stroke-width="1"/></svg></span>
  <span class="b b26"><svg class="i14"><use href="#help"/></svg></span>
  <span class="b n22 m3"><svg class="i16"><use href="#cap"/></svg></span>
  <span class="tutorial">教程</span>
</div>

<div class="ribbon">
  <section class="rg g-measure"><div class="ricons end"><svg class="i24"><use href="#ruler"/></svg><svg class="i24"><use href="#ruler"/></svg><span class="ar"></span></div><div class="rlabel"><span>测量</span><span class="ar"></span></div></section>
  <section class="rg g-show"><div class="ricons"><svg class="i24"><use href="#arc"/></svg><svg class="i24"><use href="#spline"/></svg><svg class="i24"><use href="#line"/></svg><svg class="i24"><use href="#rcube"/></svg><svg class="i24"><use href="#wrench"/></svg><svg class="i24"><use href="#bsurf"/></svg></div><div class="rlabel"><span>显示</span><span class="ar"></span></div></section>
  <section class="rg g-curve"><div class="ricons"><svg class="i24"><use href="#comb"/></svg><svg class="i24"><use href="#cone"/></svg><svg class="i24"><use href="#wave"/></svg><svg class="i24"><use href="#calc"/></svg></div><div class="rlabel"><span>曲线形状</span><span class="ar"></span></div></section>
  <section class="rg g-face"><div class="ricons"><svg class="i24"><use href="#s1"/></svg><svg class="i24"><use href="#s2"/></svg><svg class="i24"><use href="#s3"/></svg><svg class="i24"><use href="#s4"/></svg><svg class="i24"><use href="#s5"/></svg></div><div class="rlabel"><span>面形状</span><span class="ar"></span></div></section>
  <section class="rg g-rel"><div class="ricons"><svg class="i24"><use href="#r1"/></svg><svg class="i24"><use href="#r2"/></svg><svg class="i24"><use href="#r3"/></svg><svg class="i24"><use href="#r4"/></svg></div><div class="rlabel"><span>关系</span><span class="ar"></span></div></section>
  <section class="rg g-add"><div class="ricons"><svg class="i24"><use href="#f1"/></svg><svg class="i24"><use href="#f2"/></svg><svg class="i24"><use href="#f3"/></svg><svg class="i24"><use href="#f4"/></svg><svg class="i24"><use href="#f5"/></svg></div><div class="rlabel"><span>增材制造设计验证</span><span class="ar"></span></div></section>
  <section class="rg g-last"><div class="ricons end"><svg class="i24"><use href="#hruler"/></svg><span class="ar"></span></div></section>
  <span class="ar ribbon-end"></span>
</div>

<div class="toolbar">
  <svg class="i16 tb-first"><use href="#menuic"/></svg><span class="tt m5 t-menu">菜单(<u>M</u>)</span><span class="ar"></span><i class="sep m2"></i>
  <span class="b m9"><svg class="i17"><use href="#n1"/></svg></span><span class="b"><svg class="i17"><use href="#n2"/></svg></span><span class="b n22 on m3"><svg class="i17"><use href="#n3"/></svg></span><span class="b"><svg class="i17"><use href="#n4"/></svg></span><i class="sep m8"></i>
  <span class="b n22 on m8"><svg class="i17"><use href="#n5"/></svg></span><span class="b m1"><svg class="i17"><use href="#n6"/></svg></span><i class="sep m7"></i>
  <div class="sel s1"><span>无选择过滤器</span></div><div class="sel s2"><span>整个装配</span></div>
  <span class="b m7"><svg class="i17"><use href="#chain"/></svg></span><span class="b"><svg class="i17"><use href="#filt1"/></svg></span><span class="b"><svg class="i17"><use href="#filt2"/></svg></span><span class="ar"></span>
  <span class="b"><svg class="i17"><use href="#rot"/></svg></span><span class="b"><svg class="i17"><use href="#gbolt"/></svg></span><span class="b"><svg class="i17"><use href="#hex"/></svg></span><span class="b"><svg class="i17"><use href="#lasso"/></svg></span><span class="b m1"><svg class="i17"><use href="#rectsel"/></svg></span><span class="ar"></span>
  <span class="b m3"><svg class="i17"><use href="#cyl"/></svg></span><span class="b on"><svg class="i17"><use href="#cube1"/></svg></span><span class="b m2"><svg class="i17"><use href="#cube2"/></svg></span><span class="b on"><svg class="i17"><use href="#surf"/></svg></span><span class="b m2"><svg class="i17"><use href="#redcube"/></svg></span><span class="b"><svg class="i17"><use href="#gsurf"/></svg></span><i class="sep m8"></i>
  <span class="b m7"><svg class="i17"><use href="#zfit"/></svg></span><span class="b m1"><svg class="i17"><use href="#pan"/></svg></span><span class="b"><svg class="i17"><use href="#refresh"/></svg></span><span class="b m2"><svg class="i17"><use href="#bluei"/></svg></span><span class="b"><svg class="i17"><use href="#gdoc"/></svg></span><span class="b m2"><svg class="i17"><use href="#grid"/></svg></span><span class="ar"></span>
  <span class="b m1"><svg class="i17"><use href="#printer"/></svg></span><span class="ar"></span><span class="b m1"><svg class="i17"><use href="#bcube"/></svg></span><span class="ar"></span><span class="b"><svg class="i17"><use href="#tri"/></svg></span><span class="ar"></span><i class="sep m8"></i>
  <span class="tb-end"><span class="ar"></span></span>
</div>

<div class="main">
  <aside class="side">
    <span class="si gearbox"><svg class="i16"><use href="#gear"/></svg></span>
    <span class="si g1"><svg class="i16"><use href="#a1"/></svg></span>
    <span class="si g12"><svg class="i16"><use href="#a2"/></svg></span>
    <span class="si g16"><svg class="i16"><use href="#a3"/></svg></span>
    <span class="si g14 act"><svg class="i16"><use href="#a4"/></svg></span>
    <span class="si g14"><svg class="i16"><use href="#a5"/></svg></span>
    <span class="si g15"><svg class="i16"><use href="#a6"/></svg></span>
    <span class="si g13"><svg class="i16"><use href="#a7"/></svg></span>
    <span class="si g13"><svg class="i16"><use href="#a8"/></svg></span>
    <span class="si g27"><svg class="i16"><use href="#a9"/></svg></span>
    <span class="si g26"><svg class="i16"><use href="#a10"/></svg></span>
    <span class="si g26"><svg class="i16"><use href="#a11"/></svg></span>
    <span class="si g14"><svg class="i16"><use href="#a12"/></svg></span>
    <span class="si g14"><svg class="i16"><use href="#a13"/></svg></span>
    <span class="si g13"><svg class="i16"><use href="#a14"/></svg></span>
    <span class="si g15"><svg class="i16"><use href="#a15"/></svg></span>
    <span class="si g13"><svg class="i16"><use href="#a16"/></svg></span>
  </aside>

  <section class="panel">
    <header class="phead"><span>工序导航器 - 几何</span><span class="maxbtn"></span></header>
    <div class="frame">
      <div class="row thead"><span>名称</span><span>刀轨</span><span>刀具</span><span>刀...</span><span>余量</span><span>底面余量</span><span>进给</span><span>速度</span><span>时间</span><span>最短刀</span></div>
      <div class="tbody">
        <svg class="conn" viewBox="0 0 80 220"><path d="M9.500 30V150M9.500 30.500H19M9.500 50.500H19M9.500 70.500H19M9.500 90.500H19M9.500 110.500H19M9.500 130.500H19M9.500 150.500H19M28.500 155V170M28.500 170.500H38M47.500 175V210M47.500 190.500H58M47.500 210.500H58" fill="none" stroke="#9aa" stroke-dasharray="1 1"/></svg>
        <div class="row"><span class="root">GEOMETRY</span><span></span><span></span><span></span><span></span><span></span><span></span><span></span><span>05:18:16</span><span></span></div>
        <div class="row"><span class="node n0"><svg class="i15"><use href="#folder"/></svg><b>未用项</b></span><span></span><span></span><span></span><span></span><span></span><span></span><span></span><span>00:00:00</span><span></span></div>
        <div class="row"><span class="node n1e"><em class="exp plus"></em><svg class="i15"><use href="#mcs"/></svg><b>M1</b></span><span></span><span></span><span></span><span></span><span></span><span></span><span></span><span>00:08:42</span><span></span></div>
        <div class="row"><span class="node n1e"><em class="exp plus"></em><svg class="i15"><use href="#mcs"/></svg><b>M2</b></span><span></span><span></span><span></span><span></span><span></span><span></span><span></span><span>01:47:13</span><span></span></div>
        <div class="row"><span class="node n1e"><em class="exp plus"></em><svg class="i15"><use href="#mcs"/></svg><b>M3</b></span><span></span><span></span><span></span><span></span><span></span><span></span><span></span><span>02:29:46</span><span></span></div>
        <div class="row"><span class="node n1e"><em class="exp plus"></em><svg class="i15"><use href="#mcs"/></svg><b>M4</b></span><span></span><span></span><span></span><span></span><span></span><span></span><span></span><span>00:43:06</span><span></span></div>
        <div class="row"><span class="node n1e"><em class="exp plus"></em><svg class="i15"><use href="#mcs"/></svg><b>M5</b></span><span></span><span></span><span></span><span></span><span></span><span></span><span></span><span>00:07:50</span><span></span></div>
        <div class="row"><span class="node n1e"><em class="exp"></em><svg class="i15"><use href="#mcs"/></svg><b>M6</b></span><span></span><span></span><span></span><span></span><span></span><span></span><span></span><span>00:01:39</span><span></span></div>
        <div class="row"><span class="node n2e"><em class="exp"></em><svg class="i15"><use href="#wp"/></svg><b>W6</b></span><span></span><span></span><span></span><span></span><span></span><span></span><span></span><span>00:01:39</span><span></span></div>
        <div class="row"><span class="node n3"><svg class="i13"><use href="#ok"/></svg><svg class="i15 opi"><use href="#op"/></svg><b>21</b></span><span><svg class="i13"><use href="#ok"/></svg></span><span>ZXZ</span><span>7</span><span></span><span></span><span>100 mmpm</span><span>1500 rp...</span><span>00:00:13</span><span></span></div>
        <div class="row"><span class="node n3"><svg class="i13"><use href="#ok"/></svg><svg class="i15 opi"><use href="#op"/></svg><b>22</b></span><span><svg class="i13"><use href="#ok"/></svg></span><span>ZTD4.2</span><span>8</span><span></span><span></span><span>80 mmpm</span><span>1200 rp...</span><span>00:01:02</span><span></span></div>
      </div>
      <div class="hscroll"><svg class="sarr" viewBox="0 0 8 12"><path d="M6 1 2 6l4 5" fill="none" stroke="#555" stroke-width="1.600"/></svg><span class="thumb"></span><svg class="sarr" viewBox="0 0 8 12"><path d="M2 1l4 5-4 5" fill="none" stroke="#555" stroke-width="1.600"/></svg></div>
    </div>
    <div class="band"></div>
    <div class="fold"><span>相关性</span><svg class="vchev" viewBox="0 0 12 10"><path d="M1 1l5 8 5-8" fill="none" stroke="#0f7399" stroke-width="2"/></svg></div>
    <div class="fold"><span>细节</span><svg class="vchev" viewBox="0 0 12 10"><path d="M1 1l5 8 5-8" fill="none" stroke="#0f7399" stroke-width="2"/></svg></div>
  </section>

  <section class="view">
    <div class="doctabs">
      <div class="dtab on"><svg class="i14"><use href="#tabtool"/></svg><span class="dname">0-03-导向槽-全铣.prt</span><svg class="i12 dw"><use href="#docw"/></svg><svg class="dx" viewBox="0 0 10 10"><path d="M1 1l8 8M9 1l-8 8" stroke="#fff" stroke-width="2.400"/></svg></div>
      <div class="dtab"><svg class="i14"><use href="#tabcube"/></svg><span class="dname">_model1.prt</span><svg class="i12 dk"><use href="#docw"/></svg></div>
    </div>
    <div class="canvas">
      <svg class="part" viewBox="0 0 840 720">
        <g fill="#cfe0e7" stroke="#2c3338" stroke-width="3">
          <path d="M202 265l16-20 20 17-16 20zM285 160l15-12 18 17-15 13zM390 205l20-7 8 24-21 6zM462 250l28-5v23l-25 2zM580 185l15-10 13 15-16 10zM425 85l20-7 13 17-18 15zM428 65l27-17 5 7-15 23z"/>
        </g>
        <path d="M215 290 330 365 460 452 440 452 385 422 330 390 240 322z" fill="#2f3a40"/>
        <path d="M218 288 415 70 440 78 400 130 380 165 392 238 412 278 525 262 628 168 645 168 620 220 590 285 490 420 465 440 330 362z" fill="#d5e5ec" stroke="#2c3338" stroke-width="3"/>
        <path d="M380 165 395 128 418 112 402 170 416 232 412 278 392 238z" fill="#7f8f96" stroke="#2c3338" stroke-width="2"/>
        <path d="M328 345 395 265 412 280 350 362z" fill="#66777f" stroke="#2c3338" stroke-width="3"/>
        <path d="M262 258 352 138 372 152 282 276z" fill="#d8e7ed" stroke="#2c3338" stroke-width="3"/>
        <path d="M440 380 595 195 612 210 462 396z" fill="#d8e7ed" stroke="#2c3338" stroke-width="3"/>
        <path d="M495 415 565 325 612 215 640 172 618 245 560 345 505 415z" fill="#7f8f96" stroke="#2c3338" stroke-width="2"/>
        <g fill="#cfe0e7" stroke="#2c3338" stroke-width="3"><path d="M545 322l20-12 13 15-18 15zM465 420l20-15 15 20-20 15zM610 190l26-25 7 5-16 26z"/></g>
        <path d="M330 362 520 480" stroke="#d8302c" stroke-width="6"/><path d="M550 500 500 480 515 460z" fill="#e2403c"/>
        <path d="M325 365 245 240" stroke="#1f7a2a" stroke-width="5"/><path d="M228 210 262 240 240 252z" fill="#1f6f28"/>
        <path d="M325 365 175 550" stroke="#1f55e0" stroke-width="5"/><path d="M135 600 160 545 185 563z" fill="#1f55e8"/>
        <g fill="#33e040"><circle cx="232" cy="312" r="4"/><circle cx="308" cy="356" r="4"/><circle cx="318" cy="370" r="4"/><circle cx="358" cy="388" r="4"/><circle cx="370" cy="403" r="4"/><circle cx="441" cy="440" r="4"/></g>
        <g fill="#7f8fc0"><circle cx="75" cy="268" r="2"/><circle cx="122" cy="310" r="2"/><circle cx="172" cy="363" r="2"/><circle cx="217" cy="405" r="2"/><circle cx="22" cy="427" r="2"/><circle cx="75" cy="463" r="2"/></g>
        <text x="235" y="203" class="lbl ly">YM</text><text x="498" y="544" class="lbl lx">XM</text><text x="143" y="641" class="lbl lz">ZM</text>
      </svg>
      <svg class="triad" viewBox="0 0 480 330">
        <path d="M178 110 262 185 222 240 185 225 132 178z" fill="#aabbc6" fill-opacity=".85"/>
        <path d="M185 205 115 162" stroke="#d83a3a" stroke-width="10"/><path d="M92 148 125 152 115 172z" fill="#d83a3a"/>
        <path d="M195 200 255 125" stroke="#33a03a" stroke-width="10"/><path d="M272 105 265 135 245 120z" fill="#33a03a"/>
        <path d="M192 215 222 262" stroke="#1a40d0" stroke-width="10"/><path d="M232 272 208 258 226 248z" fill="#1a40d0"/>
        <circle cx="186" cy="205" r="13" fill="url(#gBall)"/>
        <text x="68" y="152" class="tr trx">X</text><text x="270" y="106" class="tr try">Y</text><text x="224" y="293" class="tr trz">Z</text>
      </svg>
    </div>
  </section>
</div>

<footer class="status"><span>选择平面对象（法向定义 Z 轴）</span><svg class="i16"><use href="#fit"/></svg></footer>
<div class="taskbar"><span class="tk-btn"></span><span class="clock">16:23 周三</span></div>

<svg class="watermark" viewBox="0 0 1080 384">
  <path d="M340 100 445 160V285L340 345 233 285V160z" fill="#1f8fd8" fill-opacity=".62"/>
  <path d="M340 100 233 160c60-30 135-15 162 60 8-50-10-95-55-120z" fill="#8fc3de" fill-opacity=".55"/>
  <path d="M233 160c-10 50 0 100 42 135-20-45-20-90 15-130-20-10-40-10-57-5z" fill="#8fc3de" fill-opacity=".28"/>
  <path d="M275 295c30 30 75 35 110 10 20-15 40-30 60-60-30 40-80 60-130 50-15-3-30-3-40 0z" fill="#fff" fill-opacity=".18"/>
  <path d="M340 150 400 185V255L340 292 278 255V185z" fill="#14709f" fill-opacity=".85"/>
  <path d="M340 168 385 195 340 222 293 195z" fill="#4aa0cf"/><path d="M293 195 340 222V276L293 250z" fill="#3292c6"/><path d="M340 222 385 195V250L340 276z" fill="#0b82c0"/>
</svg>
<div class="wm-text"><span class="wm-big"><b>3D</b>世界网</span><span class="wm-small">WWW.3DSJW.COM</span></div>

<svg class="redarrow" viewBox="0 0 142 40"><path d="M1 3 126 20l4-6 10 18-24 3 5-8z" fill="#f33c3c"/></svg>

<div class="menu m-top">
  <div class="mtitle">上边框条</div>
  <div class="mi hi"><svg class="ck"><use href="#ck"/></svg><svg class="ic"><use href="#menuic"/></svg><span>菜单(<u>M</u>)</span><span class="ar r"></span></div>
  <div class="mi"><svg class="ck"><use href="#ck"/></svg><svg class="ic"><use href="#a4"/></svg><span>工序导航器组</span><span class="ar r"></span></div>
  <div class="mi"><svg class="ck"><use href="#ck"/></svg><svg class="ic"><use href="#a5"/></svg><span>加工特征导航器组</span><span class="ar r"></span></div>
  <div class="mi"><svg class="ck"><use href="#ck"/></svg><svg class="ic"><use href="#msel"/></svg><span>选择组</span><span class="ar r"></span></div>
  <div class="mi"><svg class="ck"><use href="#ck"/></svg><svg class="ic"><use href="#mview"/></svg><span>视图组</span><span class="ar r"></span></div>
  <div class="mi"><i></i><svg class="ic"><use href="#mtool"/></svg><span>实用工具组</span><span class="ar r"></span></div>
  <hr class="msep">
  <div class="mi"><i></i><i></i><span>重置边框条</span></div>
  <hr class="msep thin">
  <div class="mi"><i></i><svg class="ic"><use href="#cust"/></svg><span>定制(<u>Z</u>)...<b class="short">Ctrl+1</b></span></div>
</div>
<div class="progress"><span></span></div>

<div class="menu m-mid">
  <div class="mi"><svg class="ck"><use href="#ck"/></svg><i></i><span>文件(<u>F</u>)</span><span class="ar r"></span></div>
  <div class="mi"><svg class="ck"><use href="#ck"/></svg><i></i><span>编辑(<u>E</u>)</span><span class="ar r"></span></div>
  <div class="mi"><svg class="ck"><use href="#ck"/></svg><i></i><span>视图(<u>V</u>)</span><span class="ar r"></span></div>
  <div class="mi"><svg class="ck"><use href="#ck"/></svg><i></i><span>插入(<u>S</u>)</span><span class="ar r"></span></div>
  <div class="mi"><svg class="ck"><use href="#ck"/></svg><i></i><span>格式(<u>R</u>)</span><span class="ar r"></span></div>
  <div class="mi"><svg class="ck"><use href="#ck"/></svg><i></i><span>工具(<u>T</u>)</span><span class="ar r"></span></div>
  <div class="mi"><svg class="ck"><use href="#ck"/></svg><i></i><span>装配(<u>A</u>)</span><span class="ar r"></span></div>
  <div class="mi hi"><svg class="ck"><use href="#ck"/></svg><i></i><span>P<u>M</u>I</span><span class="ar r"></span></div>
  <div class="mi"><svg class="ck"><use href="#ck"/></svg><i></i><span>信息(<u>I</u>)</span><span class="ar r"></span></div>
  <div class="mi"><svg class="ck"><use href="#ck"/></svg><i></i><span>分析(<u>L</u>)</span><span class="ar r"></span></div>
  <div class="mi"><svg class="ck"><use href="#ck"/></svg><svg class="ic"><use href="#mpref"/></svg><span>首选项(<u>P</u>)</span><span class="ar r"></span></div>
  <div class="mi"><i></i><i></i><span>应用模块(<u>N</u>)</span><span class="ar r"></span></div>
  <div class="mi"><svg class="ck"><use href="#ck"/></svg><i></i><span>浩强工具v2.59</span><span class="ar r"></span></div>
  <div class="mi"><svg class="ck"><use href="#ck"/></svg><svg class="ic"><use href="#win"/></svg><span>窗口(<u>O</u>)</span><span class="ar r"></span></div>
  <div class="mi"><svg class="ck"><use href="#ck"/></svg><i></i><span>GC工具箱</span><span class="ar r"></span></div>
  <div class="mi"><svg class="ck"><use href="#ck"/></svg><i></i><span>燕秀UG模具8.12</span><span class="ar r"></span></div>
  <div class="mi"><svg class="ck"><use href="#ck"/></svg><svg class="ic"><use href="#mhelp"/></svg><span>帮助(<u>H</u>)</span><span class="ar r"></span></div>
  <hr class="msep">
  <div class="mi"><i></i><i></i><span>重置组</span></div>
</div>

<div class="menu m-pmi">
  <div class="mi"><svg class="ck"><use href="#ck"/></svg><i></i><span>尺寸(<u>D</u>)</span><span class="ar r"></span></div>
  <div class="mi"><svg class="ck"><use href="#ck"/></svg><svg class="ic"><use href="#mnote"/></svg><span>注释(<u>N</u>)...</span></div>
  <div class="mi"><svg class="ck"><use href="#ck"/></svg><svg class="ic"><use href="#mfcf"/></svg><span>特征控制框(<u>F</u>)...</span></div>
  <div class="mi"><svg class="ck"><use href="#ck"/></svg><svg class="ic"><use href="#mdat"/></svg><span>基准特征符号(<u>A</u>)...</span></div>
  <div class="mi"><svg class="ck"><use href="#ck"/></svg><svg class="ic"><use href="#mtgt"/></svg><span>基准目标(<u>T</u>)...</span></div>
  <div class="mi"><svg class="ck"><use href="#ck"/></svg><svg class="ic"><use href="#mrgh"/></svg><span>表面粗糙度(<u>S</u>)...</span></div>
  <div class="mi"><svg class="ck"><use href="#ck"/></svg><svg class="ic"><use href="#mwld"/></svg><span>焊接符号(<u>W</u>)...</span></div>
  <div class="mi"><svg class="ck"><use href="#ck"/></svg><svg class="ic"><use href="#msym"/></svg><span>符号标注(<u>B</u>)...</span></div>
  <div class="mi"><svg class="ck"><use href="#ck"/></svg><svg class="ic"><use href="#mtbl"/></svg><span>表(<u>T</u>)...</span></div>
  <div class="mi"><svg class="ck"><use href="#ck"/></svg><i></i><span>符号(<u>Y</u>)</span><span class="ar r"></span></div>
  <div class="mi"><svg class="ck"><use href="#ck"/></svg><i></i><span>补充几何信息(<u>G</u>)</span><span class="ar r"></span></div>
  <div class="mi"><svg class="ck"><use href="#ck"/></svg><i></i><span>专用(<u>Z</u>)</span><span class="ar r"></span></div>
  <div class="mi"><svg class="ck"><use href="#ck"/></svg><i></i><span>安全标记(<u>K</u>)</span><span class="ar r"></span></div>
  <div class="mi"><i></i><i></i><span>几何公差(<u>M</u>)</span><span class="ar r"></span></div>
  <div class="mi"><svg class="ck"><use href="#ck"/></svg><svg class="ic"><use href="#msec"/></svg><span>剖视图(<u>C</u>)...</span></div>
  <div class="mi"><svg class="ck"><use href="#ck"/></svg><svg class="ic"><use href="#mres"/></svg><span>调整大小(<u>R</u>)</span></div>
  <div class="mi"><svg class="ck"><use href="#ck"/></svg><svg class="ic"><use href="#mreset"/></svg><span>重置所有 <u>P</u>MI 设置</span></div>
  <div class="mi"><svg class="ck"><use href="#ck"/></svg><svg class="ic"><use href="#msup"/></svg><span>抑制 PMI 对象(<u>U</u>)</span></div>
  <div class="mi hi nofly"><i></i><svg class="ic"><use href="#msec2"/></svg><span>剖视图（原有）(<u>V</u>)...</span></div>
  <div class="mi last"><i></i><i></i><span>重置菜单</span></div>
</div>

<div class="redbox rb-menu"></div>
<div class="redbox rb-pmi"></div>
<div class="redbox rb-sect"></div>
</body>
</html>
```
FILE: styles.css
```css
* { box-sizing: border-box; }
html, body { margin: 0; padding: 0; }
body {
  width: 1920px; height: 1048px; overflow: hidden; position: relative;
  display: flex; flex-direction: column; background: #f0f0f0; color: #222;
  font: 12px/20px "Open Sans", "Noto Sans CJK SC", sans-serif;
}
svg { display: block; flex: none; }
.defs { position: absolute; width: 0; height: 0; }
i, em, b { font-style: normal; font-weight: normal; }
u { text-decoration: underline; }

.i12 { width: 12px; height: 12px; } .i13 { width: 13px; height: 13px; }
.i14 { width: 14px; height: 14px; } .i15 { width: 15px; height: 15px; }
.i16 { width: 16px; height: 16px; } .i17 { width: 17px; height: 17px; }
.i18 { width: 18px; height: 18px; } .i24 { width: 24px; height: 24px; }
.m1 { margin-left: 1px; } .m2 { margin-left: 2px; } .m3 { margin-left: 3px; }
.m5 { margin-left: 5px; } .m6 { margin-left: 6px; } .m7 { margin-left: 7px; }
.m8 { margin-left: 8px; } .m9 { margin-left: 9px; }

.b { width: 24px; height: 22px; display: flex; align-items: center; justify-content: center; flex: none; }
.b.n22 { width: 22px; } .b.b26 { width: 26px; }
.b.on { background: #c9e2ea; border: 1px solid #aed6e1; }
.ar { width: 12px; height: 12px; display: flex; align-items: center; justify-content: center; flex: none; }
.ar::after { content: ""; border-left: 3.5px solid transparent; border-right: 3.5px solid transparent; border-top: 4px solid #222; }
.ar.r::after { border: 0; border-left: 4px solid #222; border-top: 4px solid transparent; border-bottom: 4px solid transparent; }
.sep { width: 1px; height: 22px; background: #bdbdbd; flex: none; }
.tt { font-size: 11px; line-height: 20px; flex: none; }

/* title bar */
.titlebar { height: 26px; display: flex; align-items: center; padding-left: 4px; flex: none; }
.nx { width: 33px; font: bold 21px/26px "Liberation Sans", sans-serif; color: #8a9db0; letter-spacing: 1px; margin-right: 4px; }
.cust { width: 10px; height: 10px; border-top: 1px solid #222; position: relative; margin-top: -1px; }
.cust::after { content: ""; position: absolute; left: 2px; top: 3px; border-left: 3px solid transparent; border-right: 3px solid transparent; border-top: 4px solid #222; }
.apptitle { margin-left: 638px; font-size: 13px; color: #111; }
.siemens { margin-left: auto; font: bold 12px/26px "Liberation Sans", sans-serif; color: #0a9a9a; letter-spacing: 1.35px; }
.wbtns { display: flex; align-items: center; width: 92px; padding-left: 27px; gap: 14px; height: 26px; }
.wmin { width: 8px; height: 2px; background: #555; margin-top: 9px; }
.wmax { width: 12px; height: 11px; border: 1.5px solid #555; box-shadow: 2px -2px 0 -0.5px #f0f0f0, 3px -3px 0 -0.5px #555; }
.wclose { width: 14px; height: 14px; position: relative; }
.wclose::before, .wclose::after { content: ""; position: absolute; left: 6px; top: -1px; width: 2px; height: 16px; background: #555; transform: rotate(45deg); }
.wclose::after { transform: rotate(-45deg); }

/* tabs */
.tabbar { height: 28px; background: #bbb; display: flex; align-items: center; flex: none; }
.filetab { width: 81px; height: 28px; background: #54a0b9; color: #fff; font-size: 13px; line-height: 27px; text-align: center; }
.tabs { display: flex; margin-left: 465px; height: 28px; }
.tab { padding: 0 13px; font-size: 13px; line-height: 28px; color: #222; }
.tab.wx { padding: 0 14px; }
.tab.on { background: #f0f0f0; color: #0e7a9c; border-top: 1px solid #ddd; line-height: 26px; margin-top: 1px; height: 27px; }
.search { margin-left: auto; width: 125px; height: 19px; background: #fff; border: 1px solid #ccc; display: flex; align-items: center; justify-content: space-between; padding: 0 1px 0 2px; }
.ph { font-size: 11px; color: #aaa; line-height: 17px; }
.chev { width: 14px; height: 10px; }
.tutorial { width: 31px; font-size: 12px; color: #222; }

/* ribbon */
.ribbon { height: 68px; display: flex; padding: 4px 0 2px 452px; border-bottom: 2px solid #bdbdbd; flex: none; position: relative; }
.rg { height: 60px; display: flex; flex-direction: column; border-right: 1px solid #c8c8c8; flex: none; }
.g-measure { width: 88px; } .g-show { width: 212px; } .g-curve { width: 146px; } .g-face { width: 180px; }
.g-rel { width: 145px; } .g-add { width: 179px; } .g-last { width: 49px; }
.ricons { height: 41px; padding-top: 11px; display: flex; justify-content: center; gap: 9px; }
.ricons.end { justify-content: flex-start; gap: 5px; padding-left: 14px; }
.ricons.end .ar { margin: 3px 0 0 -1px; }
.g-last .ricons.end { padding-left: 7px; }
.g-last .ricons.end .ar { margin-left: 0; }
.rlabel { flex: 1; display: flex; align-items: center; font-size: 11px; line-height: 16px; color: #0e7a9c; padding-right: 4px; padding-top: 10px; }
.rlabel > span:first-child { flex: 1; text-align: center; }
.ribbon-end { position: absolute; right: 2px; bottom: 3px; }

/* toolbar */
.toolbar { height: 32px; display: flex; align-items: center; border-bottom: 1px solid #a8a8a8; padding-left: 349px; flex: none; }
.t-menu { width: 40px; font-size: 11px; }
.toolbar .t-menu + .ar { margin-left: 1px; }
.sel { height: 20px; background: #fff; border: 1px solid #aaa; font-size: 11px; line-height: 18px; padding-left: 2px; position: relative; flex: none; }
.sel::after { content: ""; position: absolute; right: 6px; top: 7px; border-left: 4px solid transparent; border-right: 4px solid transparent; border-top: 4px solid #222; }
.s1 { width: 133px; margin-left: 12px; } .s2 { width: 139px; margin-left: 8px; }
.tb-end { margin-left: auto; margin-right: 2px; width: 11px; height: 26px; background: #c9e2ea; display: flex; align-items: flex-end; justify-content: center; padding-bottom: 2px; }

/* main */
.main { flex: 1; min-height: 0; display: flex; }
.side { width: 26px; background: #bbb; display: flex; flex-direction: column; align-items: center; flex: none; padding-left: 4px; }
.si { width: 16px; height: 16px; flex: none; position: relative; }
.si svg { position: relative; }
.gearbox { margin-top: 6px; margin-left: -8px; }
.g1 { margin-top: 30px; } .g12 { margin-top: 16px; } .g13 { margin-top: 17px; } .g14 { margin-top: 18px; }
.g15 { margin-top: 19px; } .g16 { margin-top: 20px; } .g26 { margin-top: 30px; } .g27 { margin-top: 31px; }
.si.act::before { content: ""; position: absolute; left: -4px; right: -3px; top: -10px; bottom: -10px; background: #f0f0f0; border-radius: 1px 0 0 1px; }

.panel { width: 808px; background: #f0f0f0; padding-left: 5px; display: flex; flex-direction: column; flex: none; }
.phead { height: 28px; flex: none; display: flex; align-items: center; padding: 2px 0 0 3px; font-size: 12px; color: #222; position: relative; }
.maxbtn { position: absolute; left: 775px; top: 10px; width: 12px; height: 11px; border: 1px solid #222; border-top-width: 2px; }
.frame { width: 794px; height: 777px; flex: none; border: 1px solid #bcbcbc; border-bottom: 0; background: #fff; display: flex; flex-direction: column; }
.row { display: grid; grid-template-columns: 172px 50px 129px 33px 84px 83px 79px 62px 64px 36px; height: 20px; line-height: 19px; white-space: nowrap; position: relative; }
.row > span { padding-left: 4px; overflow: hidden; display: flex; align-items: center; padding-bottom: 2px; }
.thead { height: 22px; flex: none; background: #f0f0f0; border-bottom: 1px solid #d2d2d2; }
.row.thead > span { padding: 2px 0 0 6px; border-right: 1px solid #d6d6d6; height: 21px; }
.row.thead > span:last-child { border-right: 0; }
.tbody {
  flex: none; height: 735px; overflow: hidden; position: relative;
  --c: #e6e6e6;
  background:
    linear-gradient(#000, #000) 171px 0 / 1px 100% no-repeat,
    linear-gradient(var(--c), var(--c)) 221px 0 / 1px 100% no-repeat,
    linear-gradient(var(--c), var(--c)) 350px 0 / 1px 100% no-repeat,
    linear-gradient(var(--c), var(--c)) 383px 0 / 1px 100% no-repeat,
    linear-gradient(var(--c), var(--c)) 467px 0 / 1px 100% no-repeat,
    linear-gradient(var(--c), var(--c)) 550px 0 / 1px 100% no-repeat,
    linear-gradient(var(--c), var(--c)) 629px 0 / 1px 100% no-repeat,
    linear-gradient(var(--c), var(--c)) 691px 0 / 1px 100% no-repeat,
    linear-gradient(var(--c), var(--c)) 755px 0 / 1px 100% no-repeat,
    repeating-linear-gradient(#fbfbfb 0 19px, #e6e6e6 19px 20px, #f5f5f5 20px 39px, #e6e6e6 39px 40px);
}
.conn { position: absolute; left: 0; top: 0; width: 80px; height: 220px; }
.row > .root { padding-left: 3px; }
.row > .node { padding-left: 0; padding-bottom: 0; overflow: hidden; }
.node b { margin: 0 0 2px 3px; }
.row > .node.n0 { padding-left: 20px; }
.row > .node.n1e { padding-left: 5px; }
.row > .node.n2e { padding-left: 24px; }
.row > .node.n3 { padding-left: 59px; }
.opi { margin-left: 1px; }
.node.n3 b { margin-left: 5px; }
.exp { width: 9px; height: 9px; border: 1px solid #9a9a9a; background: #fff; margin-right: 6px; position: relative; flex: none; margin-top: 2px; }
.exp::before { content: ""; position: absolute; left: 1px; right: 1px; top: 3px; height: 1px; background: #111; }
.exp.plus::after { content: ""; position: absolute; top: 1px; bottom: 1px; left: 3px; width: 1px; background: #111; }
.hscroll { height: 18px; flex: none; display: flex; align-items: center; background: #fcfcfc; padding: 0 4px; }
.sarr { width: 9px; height: 12px; }
.thumb { width: 699px; height: 15px; background: #ccc; margin: 0 62px 0 4px; }
.band { width: 794px; height: 5px; background: #b5b5b5; flex: none; }
.fold { width: 794px; height: 24px; flex: none; display: flex; align-items: center; justify-content: space-between; border-bottom: 2px solid #dadada; color: #0f7399; padding: 3px 6px 0 6px; font-size: 14px; }
.vchev { width: 12px; height: 10px; margin-top: -2px; }

.view { flex: 1; border-left: 1px solid #999; display: flex; flex-direction: column; min-width: 0; }
.doctabs { height: 23px; display: flex; flex: none; }
.dtab { display: flex; align-items: center; padding: 0 6px; font-size: 12px; height: 23px; }
.dtab.on { width: 180px; background: #54a0b9; color: #fff; }
.dname { margin-left: 5px; width: 133px; white-space: nowrap; }
.dw { color: #fff; margin-right: 4px; }
.dx { width: 10px; height: 10px; }
.dtab:not(.on) .dname { width: 78px; color: #222; }
.dk { color: #333; }
.canvas { flex: 1; position: relative; background: linear-gradient(#22224a, #1a4069 45%, #0f6b99 100%); }
.canvas::before { content: ""; position: absolute; left: 0; top: 0; width: 1px; height: 100%; background: repeating-linear-gradient(transparent 0 18px, #8a9a30 18px 19px); }
.part { position: absolute; left: 124px; top: 363px; width: 280px; height: 240px; }
.triad { position: absolute; left: 4px; top: 703px; width: 160px; height: 110px; }
.lbl { font: 36px "Liberation Sans", sans-serif; }
.ly { fill: #207a30; } .lx { fill: #c93a44; } .lz { fill: #1a55e0; }
.tr { font: 36px "Liberation Sans", sans-serif; }
.trx { fill: #d84a55; } .try { fill: #2f9a3a; } .trz { fill: #1a55f0; }
.z { font: bold 8px "Liberation Sans", sans-serif; text-anchor: middle; fill: #111; }
.axis { font: bold 8px "Liberation Sans", sans-serif; text-anchor: middle; fill: #222; }
.axisr { font: bold 8px "Liberation Sans", sans-serif; text-anchor: middle; fill: #d11; }
.axisb { font: bold 11px "Liberation Serif", serif; fill: #222; }
.axisbb { font: bold 15px "Liberation Serif", serif; fill: #222; }
.qm { font: bold 13px "Liberation Sans", sans-serif; text-anchor: middle; fill: #14288c; }
.qw { font: bold 16px "Liberation Sans", sans-serif; text-anchor: middle; fill: #fff; }

.status { height: 22px; flex: none; border-top: 1px solid #aaa; display: flex; align-items: center; justify-content: space-between; padding: 0 56px 0 2px; font-size: 11px; font-weight: bold; color: #111; }
.taskbar { height: 8px; flex: none; background: #2b2e20; display: flex; overflow: hidden; padding-left: 102px; }
.tk-btn { width: 48px; height: 8px; background: #3b3b33; }
.clock { margin-left: 1612px; color: #f0f0f0; font-size: 12px; line-height: 20px; margin-top: 1px; }

/* overlays */
.watermark { position: absolute; left: 1560px; top: 920px; width: 360px; height: 128px; pointer-events: none; }
.wm-text { position: absolute; left: 1716px; top: 960px; display: flex; flex-direction: column; }
.wm-big { font: bold 37px/46px "Open Sans", "Noto Sans CJK SC", sans-serif; color: rgba(255,255,255,.42); white-space: nowrap; }
.wm-big b { font: bold 46px/46px "Liberation Sans", sans-serif; letter-spacing: -1px; margin-right: 4px; }
.wm-small { font: bold 12px/14px "Open Sans", sans-serif; letter-spacing: 5.5px; color: rgba(255,255,255,.28); white-space: nowrap; margin-top: 2px; }
.redarrow { position: absolute; left: 1768px; top: 110px; width: 142px; height: 40px; }

.menu { position: absolute; background: #fcfcfc; border: 1px solid #a8a8a8; box-shadow: 2px 2px 3px rgba(0,0,0,.35); font-size: 11px; isolation: isolate; padding-top: 2px; }
.mi { display: grid; height: 24px; align-items: center; grid-template-columns: var(--c) calc(var(--s) + 24px) 1fr 14px; padding-right: 2px; position: relative; white-space: nowrap; line-height: 20px; color: #222; }
.mi > span:nth-child(3) { padding-left: var(--g); }
.ck { width: 10px; height: 10px; justify-self: center; }
.ic { width: 15px; height: 15px; justify-self: end; margin-right: 4px; }
.m-top .ic { width: 16px; height: 16px; }
.mi.hi::before { content: ""; position: absolute; left: var(--hl); right: var(--hr); top: 2px; bottom: 1px; background: #aed6e1; z-index: -1; }
.mi.hi::after { content: ""; position: absolute; right: var(--gap); width: 2px; top: 2px; bottom: 1px; background: #fcfcfc; }
.mi.hi.nofly::after { display: none; }
.msep { border: 0; height: 1px; background: #d8d8d8; margin: 2px 8px 5px; }
.m-top { left: 1753px; top: 153px; width: 165px; height: 207px; --c: 22px; --s: 5px; --g: 4px; --hl: 3px; --hr: 2px; --gap: 14px; }
.m-top .mi { height: 20px; }
.m-top .mi.hi::before { top: 1px; bottom: 1px; }
.m-top .mi.hi::after { top: 1px; bottom: 1px; }
.m-top .mi > .ar.r { margin-left: -2px; }
.m-top .msep { margin: 2px 6px 5px; }
.m-top .msep.thin { margin: 1px 0 0; height: 2px; background: #e8e8e8; }
.mtitle { color: #0e7a9c; font-size: 12px; line-height: 18px; height: 28px; padding: 4px 0 0 7px; border-top: 1px solid #ccc; margin: 1px 2px 0; }
.short { margin-left: 13px; }
.m-mid { left: 1592px; top: 184px; width: 165px; height: 448px; --c: 20px; --s: 9px; --g: 5px; --hl: 2px; --hr: 4px; --gap: 18px; }
.m-pmi { left: 1409px; top: 355px; width: 186px; height: 495px; --c: 24px; --s: 7px; --g: 4px; --hl: 4px; --hr: 4px; --gap: 0; }
.mi.last { margin-top: 9px; }
.m-mid .msep { margin: 3px 10px 6px 8px; }
.progress { position: absolute; left: 1910px; top: 250px; width: 8px; height: 57px; background: #666; border-radius: 4px; padding: 34px 1px 2px; }
.progress span { display: block; height: 21px; background: repeating-linear-gradient(#33c35a 0 2px, #7ae090 2px 3px); }
.redbox { position: absolute; border: 3px solid #f43c3c; }
.rb-menu { left: 1751px; top: 174px; width: 169px; height: 37px; }
.rb-pmi { left: 1592px; top: 355px; width: 168px; height: 30px; }
.rb-sect { left: 1411px; top: 787px; width: 186px; height: 33px; }
```
